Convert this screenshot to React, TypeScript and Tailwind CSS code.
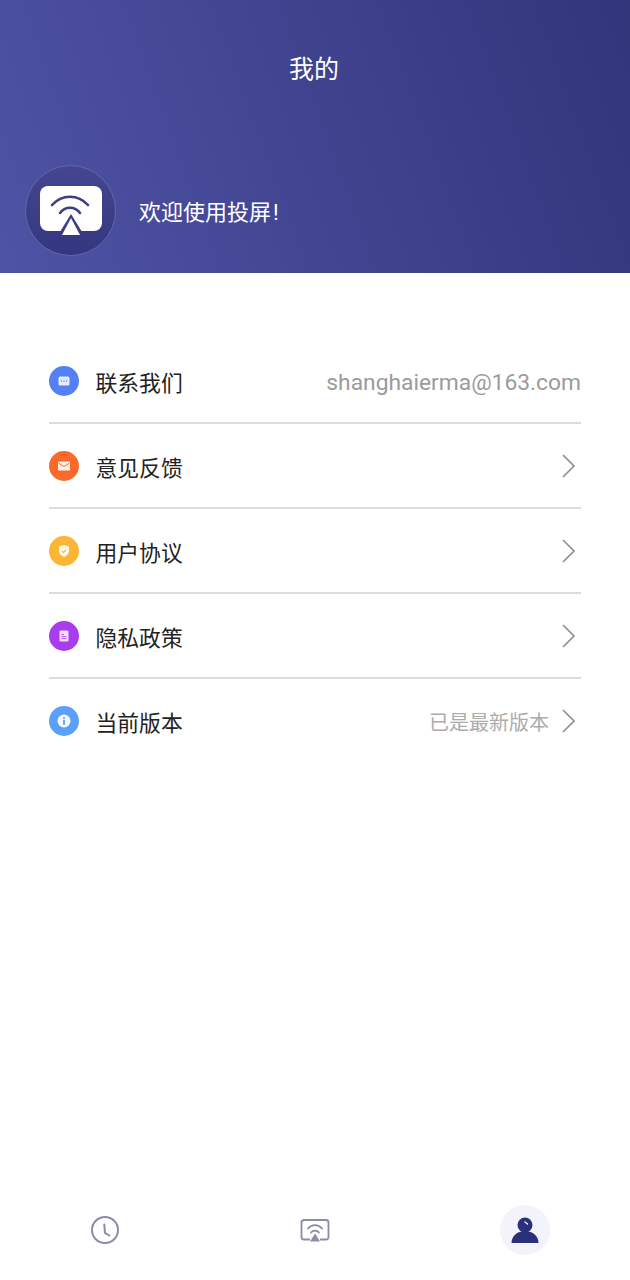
import type { ReactNode } from 'react';

const cjk = { fontFamily: '"Roboto", "Noto Sans CJK SC", sans-serif' };

function Chevron() {
  return (
    <svg width="16" height="26" viewBox="0 0 16 26" fill="none" className="shrink-0">
      <path d="M3 2 14 13 3 24" stroke="#8f8f8f" strokeWidth="1.7" />
    </svg>
  );
}

function Badge({ color, children }: { color: string; children: ReactNode }) {
  return (
    <div className={`flex h-[30px] w-[30px] shrink-0 items-center justify-center rounded-full ${color}`}>
      <svg width="16" height="16" viewBox="0 0 16 16">
        {children}
      </svg>
    </div>
  );
}

function Row({
  badge,
  label,
  right,
  last,
}: {
  badge: ReactNode;
  label: string;
  right?: ReactNode;
  last?: boolean;
}) {
  return (
    <div className={`flex h-[85px] items-center border-b-2 pt-[5px] ${last ? 'border-transparent' : 'border-[#dcdcdc]'}`}>
      <div className="-mt-[5px]">{badge}</div>
      <span className="ml-[16.5px] mt-[2px] text-[21.8px] leading-[30px] text-[#222222]">{label}</span>
      <div className="ml-auto flex items-center">{right}</div>
    </div>
  );
}

function Arrow({ text }: { text?: string }) {
  return (
    <div className="-mt-[4px] flex items-center pr-[5px]">
      {text && <span className="mr-[11px] mt-[4px] text-[20px] leading-[28px] text-[#ababab]">{text}</span>}
      <Chevron />
    </div>
  );
}

export default function App() {
  return (
    <div className="flex h-[1280px] w-[630px] flex-col bg-white" style={cjk}>
      <header className="h-[273px] bg-[linear-gradient(70deg,#4f53a5,#32357a)] pt-[53px]">
        <h1 className="pr-[2px] text-center text-[25px] font-normal leading-[34px] text-white">我的</h1>
        <div className="mt-[78px] flex items-center pl-[25px]">
          <div className="flex h-[91px] w-[91px] items-center justify-center rounded-full border border-[#6266ae] bg-gradient-to-b from-[#44478f] to-[#34377f]">
            <svg width="62" height="52" viewBox="0 0 62 52" className="mt-[3px]">
              <rect x="0" y="0" width="62" height="45" rx="8" fill="#ffffff" />
              <path d="M12 19C22 8 38 8 48 19" fill="none" stroke="#3c3f86" strokeWidth="2.6" strokeLinecap="round" />
              <path d="M20 27C25 20 35 20 40 27" fill="none" stroke="#3c3f86" strokeWidth="2.6" strokeLinecap="round" />
              <path d="M31 28 41.500 45H20.500Z" fill="#3c3f86" />
              <path d="M31 32 40 49H22Z" fill="#ffffff" />
            </svg>
          </div>
          <span className="ml-[23px] mt-[5px] text-[22px] leading-[30px] text-white">
            欢迎使用投屏<span className="ml-[2px]">!</span>
          </span>
        </div>
      </header>

      <main className="mt-[66px] flex-1 pl-[49px] pr-[49px]">
        <Row
          badge={
            <Badge color="bg-[#5580f5]">
              <rect x="2.5" y="3.5" width="11" height="9" rx="1.5" fill="#fff" fillOpacity="0.85" />
              <circle cx="5.5" cy="8" r="0.7" fill="#5580f5" />
              <circle cx="8" cy="8" r="0.7" fill="#5580f5" />
              <circle cx="10.5" cy="8" r="0.7" fill="#5580f5" />
            </Badge>
          }
          label="联系我们"
          right={<span className="text-[22.8px] leading-[30px] text-[#9b9b9b]">shanghaierma@163.com</span>}
        />
        <Row
          badge={
            <Badge color="bg-[#fb6a2b]">
              <rect x="2" y="3.5" width="12" height="9" rx="1.2" fill="#fff" fillOpacity="0.9" />
              <path d="M2.5 5 8 8.6 13.5 5" fill="none" stroke="#fb6a2b" strokeWidth="1" />
            </Badge>
          }
          label="意见反馈"
          right={<Arrow />}
        />
        <Row
          badge={
            <Badge color="bg-[#fdb536]">
              <path d="M8 2 13 3.6V8C13 11 10.5 13 8 14 5.5 13 3 11 3 8V3.6Z" fill="#fff" fillOpacity="0.9" />
              <path d="M5.8 7.8 7.5 9.4 10.3 6.6" fill="none" stroke="#fdb536" strokeWidth="1.1" />
            </Badge>
          }
          label="用户协议"
          right={<Arrow />}
        />
        <Row
          badge={
            <Badge color="bg-[#a93cee]">
              <rect x="3.5" y="2.5" width="9" height="11" rx="1.2" fill="#fff" fillOpacity="0.85" />
              <path d="M5.5 6.500H8M5.5 8.500H10.500M5.5 10.500H10.500" stroke="#a93cee" strokeWidth="0.8" />
            </Badge>
          }
          label="隐私政策"
          right={<Arrow />}
        />
        <Row
          last
          badge={
            <Badge color="bg-[#5aa0fa]">
              <circle cx="8" cy="8" r="6.500" fill="#fff" fillOpacity="0.95" />
              <circle cx="8" cy="5" r="1" fill="#5aa0fa" />
              <rect x="7.1" y="6.8" width="1.8" height="5" rx="0.6" fill="#5aa0fa" />
            </Badge>
          }
          label="当前版本"
          right={<Arrow text="已是最新版本" />}
        />
      </main>

      <nav className="grid h-[100px] grid-cols-3">
        <div className="flex items-center justify-center">
          <svg width="30" height="30" viewBox="0 0 30 30" fill="none" stroke="#8b8ca8" strokeWidth="2">
            <circle cx="15" cy="15" r="13" />
            <path d="M14.300 9.500 15 17.800 19.300 20.500" strokeLinecap="round" strokeLinejoin="round" />
          </svg>
        </div>
        <div className="flex items-center justify-center">
          <svg width="30" height="26" viewBox="0 -1.500 30 26" fill="none" stroke="#8b8ca8" strokeWidth="1.8">
            <path d="M10 21H4Q1.500 21 1.500 18.500V4Q1.500 1.500 4 1.500H26Q28.500 1.500 28.500 4V18.500Q28.500 21 26 21H20" />
            <path d="M8 10C12 5.500 18 5.500 22 10" strokeLinecap="round" />
            <path d="M11 14C13 11.500 17 11.500 19 14" strokeLinecap="round" />
            <path d="M15 15 20 23H10Z" fill="#8b8ca8" stroke="none" />
          </svg>
        </div>
        <div className="flex items-center justify-center">
          <div className="flex h-[50px] w-[50px] items-center justify-center rounded-full bg-[#f3f3fb]">
            <svg width="28" height="28" viewBox="0 0 28 28">
              <circle cx="14" cy="9" r="7.500" fill="#2c2f7a" />
              <path d="M0.500 27C0.500 20 6 15 14 15S27.500 20 27.500 27Z" fill="#2c2f7a" />
              <path d="M14 6 16.500 8" stroke="#ffffff" strokeWidth="1.3" strokeLinecap="round" />
            </svg>
          </div>
        </div>
      </nav>
    </div>
  );
}
